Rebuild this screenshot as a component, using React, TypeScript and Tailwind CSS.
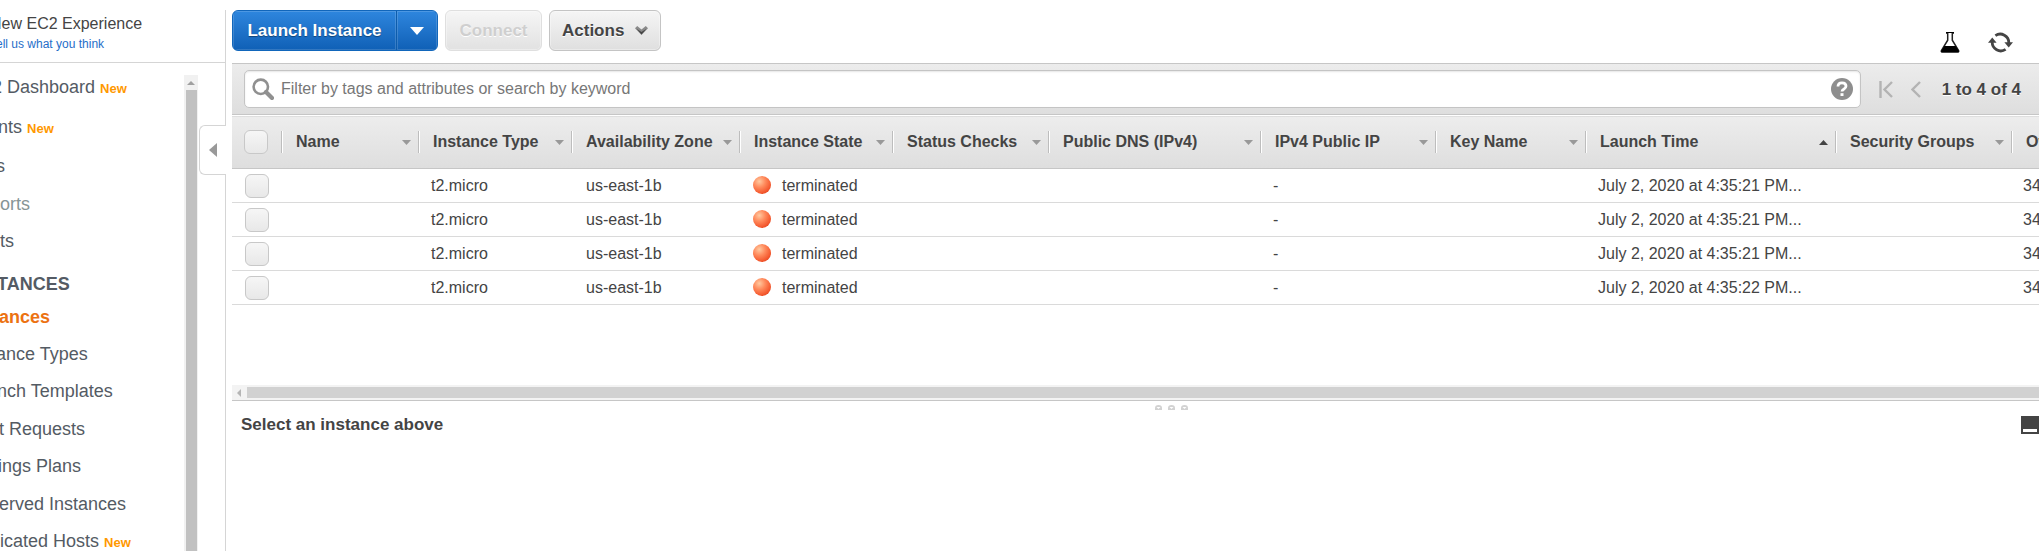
import React from 'react';

type NavItem = { label: string; isNew?: boolean; className: string };

const NAV: NavItem[] = [
  { label: 'EC2 Dashboard', isNew: true, className: 'h-10 text-[#545b64]' },
  { label: 'Events', isNew: true, className: 'h-10 text-[#545b64]' },
  { label: 'Tags', className: 'h-[38px] text-[#545b64]' },
  { label: 'Reports', className: 'h-[38px] text-[#879596]' },
  { label: 'Limits', className: 'h-9 text-[#545b64]' },
  { label: 'INSTANCES', className: 'h-[50px] font-bold text-[#545b64]' },
  { label: 'Instances', className: 'h-4 font-bold text-[#ec7211]' },
  { label: 'Instance Types', className: 'mt-[10px] h-[38px] text-[#545b64]' },
  { label: 'Launch Templates', className: 'h-[37px] text-[#545b64]' },
  { label: 'Spot Requests', className: 'h-[38px] text-[#545b64]' },
  { label: 'Savings Plans', className: 'h-[37px] text-[#545b64]' },
  { label: 'Reserved Instances', className: 'h-[38px] text-[#545b64]' },
  { label: 'Dedicated Hosts', isNew: true, className: 'h-[37px] text-[#545b64]' },
];

const COLUMNS = [
  { label: 'Name', width: 'w-[137px]' },
  { label: 'Instance Type', width: 'w-[153px]' },
  { label: 'Availability Zone', width: 'w-[168px]' },
  { label: 'Instance State', width: 'w-[153px]' },
  { label: 'Status Checks', width: 'w-[156px]' },
  { label: 'Public DNS (IPv4)', width: 'w-[212px]' },
  { label: 'IPv4 Public IP', width: 'w-[175px]' },
  { label: 'Key Name', width: 'w-[150px]' },
  { label: 'Launch Time', width: 'w-[250px]', sorted: true },
  { label: 'Security Groups', width: 'w-[176px]' },
  { label: 'Owner', width: 'w-[160px]' },
];

const ROWS = [
  { id: 1, launched: 'July 2, 2020 at 4:35:21 PM' },
  { id: 2, launched: 'July 2, 2020 at 4:35:21 PM' },
  { id: 3, launched: 'July 2, 2020 at 4:35:21 PM' },
  { id: 4, launched: 'July 2, 2020 at 4:35:22 PM' },
];

const GRAY_BUTTON =
  'flex h-[41px] items-center rounded-md border bg-linear-to-b from-[#f5f5f5] to-[#dfdfdf] px-3 text-[17px] font-bold shadow-[inset_0_0_0_1px_rgba(255,255,255,0.35)]';

function NewTag() {
  return <span className="ml-[5px] text-[13px] font-bold text-[#ff9900]">New</span>;
}

function Tick({ label }: { label: string }) {
  return (
    <input
      type="checkbox"
      aria-label={label}
      className="block size-6 appearance-none rounded-md border border-[#c8c8c8] bg-linear-to-b from-[#f6f6f6] to-[#e8e8e8]"
    />
  );
}

function Sidebar() {
  return (
    <aside className="relative mt-[10px] flex w-[226px] shrink-0 flex-col border-r border-[#d5d5d5]">
      <div className="h-[53px] overflow-hidden border-b border-[#d5d5d5] whitespace-nowrap">
        <div className="-ml-[10px]">
          <p className="pt-[3px] text-[16px] leading-[21px] text-[#444]">New EC2 Experience</p>
          <a href="#feedback" className="block text-[12px] leading-[20px] text-[#1f6ec9]">
            Tell us what you think
          </a>
        </div>
      </div>
      <div className="flex min-h-0 flex-1">
        <nav className="min-w-0 flex-1 overflow-hidden whitespace-nowrap">
          <ul className="-ml-[33px] pt-1 text-[18px]">
            {NAV.map((item) => (
              <li key={item.label} className={'flex items-center ' + item.className}>
                <a href="#nav" className="flex items-baseline">
                  {item.label}
                  {item.isNew && <NewTag />}
                </a>
              </li>
            ))}
          </ul>
        </nav>
        <div className="mt-3 mr-[27px] flex w-[14px] flex-col items-center bg-[#f1f1f1]">
          <svg className="h-[15px] w-2 shrink-0" viewBox="0 0 8 15" aria-hidden="true">
            <path d="M4 6l4 4H0z" fill="#a0a0a0" />
          </svg>
          <div className="w-[11px] flex-1 bg-[#c1c1c1]" />
        </div>
      </div>
      <button
        aria-label="Collapse sidebar"
        className="absolute top-[115px] -right-px flex h-[50px] w-[27px] items-center justify-center rounded-l-md border border-r-0 border-[#d5d5d5] bg-white"
      >
        <svg width="8" height="14" viewBox="0 0 8 14" aria-hidden="true">
          <path d="M8 0v14L0 7z" fill="#999" />
        </svg>
      </button>
    </aside>
  );
}

function Toolbar() {
  return (
    <div className="flex h-[63px] items-start pt-[10px]">
      <div className="flex h-[41px] overflow-hidden rounded-md border border-[#1166bb] bg-linear-to-b from-[#2e86de] to-[#0f60b6] text-white">
        <button className="w-[164px] border-r border-[#0d5cab] text-[17px] font-bold shadow-[inset_0_0_0_1px_rgba(255,255,255,0.15)] text-shadow-[0_1px_1px_rgba(0,0,0,0.4)]">
          Launch Instance
        </button>
        <button
          aria-label="Launch options"
          className="flex w-10 items-center justify-center shadow-[inset_0_0_0_1px_rgba(255,255,255,0.15)]"
        >
          <svg width="14" height="8" viewBox="0 0 14 8" aria-hidden="true">
            <path d="M0 0h14L7 8z" fill="#fff" />
          </svg>
        </button>
      </div>
      <button
        disabled
        className={GRAY_BUTTON + ' ml-[7px] w-[97px] justify-center border-[#dcdcdc] text-[#cacaca] opacity-90 text-shadow-[0_1px_0_#fff]'}
      >
        Connect
      </button>
      <button
        className={GRAY_BUTTON + ' ml-[7px] w-[112px] justify-between border-[#c4c4c4] text-[#444] text-shadow-[0_1px_0_#fff]'}
      >
        Actions
        <svg width="13" height="10" viewBox="0 0 13 10" aria-hidden="true">
          <path d="M0 2.2L2.2 0l4.300 3.600L10.800 0 13 2.200 6.500 9z" fill="#8a8a8a" />
          <path d="M1.600 2.800L6.500 6l4.900-3.200L6.500 8.400z" fill="#444" />
        </svg>
      </button>
      <div className="mt-[21px] mr-[26px] ml-auto flex gap-7">
        <button aria-label="Experiments">
          <svg width="20" height="21" viewBox="0 0 20 21" aria-hidden="true">
            <path d="M6 .8h8" stroke="#000" strokeWidth="1.8" />
            <path d="M7.700 1v7.200L1.400 18.600q-.5 1.200.8 1.200h15.600q1.300 0 .8-1.200L12.300 8.200V1" fill="#fff" stroke="#222" strokeWidth="1.500" />
            <path d="M4.300 14h11.400l3.200 5q.3 1.600-1.100 1.600H2.200Q.8 20.600 1.100 19z" fill="#000" />
          </svg>
        </button>
        <button aria-label="Refresh" className="mt-px">
          <svg width="25" height="21" viewBox="0 0 25 21" aria-hidden="true">
            <g fill="none" stroke="#444" strokeWidth="2.800">
              <path d="M7.400 3.600A8.600 8.600 0 0 1 20.800 11" />
              <path d="M17.600 17.400A8.600 8.600 0 0 1 4.200 10" />
            </g>
            <path d="M16.400 10.200H25L20.700 15.400z" fill="#444" />
            <path d="M0 10.800h8.600L4.300 5.600z" fill="#444" />
          </svg>
        </button>
      </div>
    </div>
  );
}

function FilterBar() {
  return (
    <div className="flex h-[52px] items-center border-y border-[#c6c6c6] bg-linear-to-b from-[#ececec] to-[#dedede] pr-[18px] pl-3">
      <label className="flex h-[38px] flex-1 items-center rounded-[5px] border border-[#c4c4c4] bg-white px-[7px] shadow-[inset_0_1px_2px_rgba(0,0,0,0.1)]">
        <svg width="22" height="22" viewBox="0 0 22 22" aria-hidden="true">
          <circle cx="8.800" cy="8.800" r="7.200" fill="none" stroke="#909090" strokeWidth="2.600" />
          <path d="M14 14l6 6" stroke="#909090" strokeWidth="4.200" strokeLinecap="round" />
        </svg>
        <input
          type="text"
          aria-label="Filter instances"
          placeholder="Filter by tags and attributes or search by keyword"
          className="min-w-0 flex-1 bg-transparent px-[7px] text-[16px] outline-none placeholder:text-[#777]"
        />
        <svg width="22" height="22" viewBox="0 0 22 22" aria-hidden="true">
          <circle cx="11" cy="11" r="11" fill="#8e8e8e" />
          <path d="M7 8.600Q7 4.800 11 4.800t4 3.300q0 1.700-2 2.900-2 1.100-2 2.600" fill="none" stroke="#fff" strokeWidth="2.800" />
          <path d="M9.500 15.200h3v2.800h-3z" fill="#fff" />
        </svg>
      </label>
      <button aria-label="First page" disabled className="ml-[18px]">
        <svg width="14" height="17" viewBox="0 0 14 17" aria-hidden="true">
          <path d="M1.500 0v17M13 1L5.500 8.500 13 16" fill="none" stroke="#b3b3b3" strokeWidth="2.400" />
        </svg>
      </button>
      <button aria-label="Previous page" disabled className="ml-[18px]">
        <svg width="10" height="17" viewBox="0 0 10 17" aria-hidden="true">
          <path d="M9 1L1.500 8.500 9 16" fill="none" stroke="#b3b3b3" strokeWidth="2.400" />
        </svg>
      </button>
      <span className="ml-[21px] pt-px text-[17px] font-bold text-[#444] text-shadow-[0_1px_0_#fff]">1 to 4 of 4</span>
    </div>
  );
}

function StateBall() {
  return (
    <span className="mb-[2px] size-[18px] shrink-0 rounded-full bg-[radial-gradient(circle_at_35%_30%,#ffc9a0_0%,#ff8a5c_35%,#f4592f_68%,#c9300f_100%)]" />
  );
}

function InstanceTable() {
  return (
    <div className="h-[270px] overflow-hidden">
      <table className="w-[1939px] min-w-full table-fixed border-collapse text-left text-[#444]">
        <thead>
          <tr className="h-[53px] border-t border-b border-t-white border-b-[#c6c6c6] bg-linear-to-b from-[#ededed] to-[#dedede]">
            <th className="w-[49px] p-0 pl-3">
              <Tick label="Select all instances" />
            </th>
            {COLUMNS.map((column) => (
              <th key={column.label} className={'p-0 ' + column.width}>
                <div className="flex h-[22px] items-center justify-between border-l border-[#bdbdbd] pr-[7px] shadow-[inset_1px_0_0_#fff]">
                  <span className="pl-[14px] text-[16px] font-bold whitespace-nowrap">{column.label}</span>
                  <svg width="9" height="5" viewBox="0 0 9 5" aria-hidden="true">
                    {column.sorted ? <path d="M0 5h9L4.500 0z" fill="#444" /> : <path d="M0 0h9L4.500 5z" fill="#999" />}
                  </svg>
                </div>
              </th>
            ))}
          </tr>
        </thead>
        <tbody className="text-[16px]">
          {ROWS.map((row) => (
            <tr key={row.id} className="h-[34px] border-b border-[#dadada]">
              <td className="p-0 pl-[13px]">
                <Tick label={'Select instance ' + row.id} />
              </td>
              <td />
              <td className="p-0 pl-[13px]">t2.micro</td>
              <td className="p-0 pl-[15px]">us-east-1b</td>
              <td className="p-0 pl-[14px]">
                <div className="flex items-center gap-[11px]">
                  <StateBall />
                  terminated
                </div>
              </td>
              <td />
              <td />
              <td className="p-0 pl-[13px]">-</td>
              <td />
              <td className="p-0 pl-[13px] whitespace-nowrap">{row.launched}...</td>
              <td />
              <td className="p-0 pl-3">34</td>
            </tr>
          ))}
        </tbody>
      </table>
    </div>
  );
}

function Grip() {
  return (
    <svg width="7" height="5" viewBox="0 0 7 5" aria-hidden="true">
      <path d="M0 5V3Q0 0 3.500 0T7 3v2z" fill="#d2d2d2" />
      <path d="M1.500 2h4l-2 2z" fill="#fff" />
    </svg>
  );
}

export default function App() {
  return (
    <div className="flex h-screen overflow-hidden bg-white font-['Liberation_Sans',Arial,sans-serif]">
      <Sidebar />
      <main className="ml-[6px] min-w-0 flex-1">
        <Toolbar />
        <FilterBar />
        <InstanceTable />
        <div className="flex h-4 items-center border-b border-[#c6c6c6] bg-[#f3f3f3]">
          <svg className="w-[15px] shrink-0" height="8" viewBox="0 0 15 8" aria-hidden="true">
            <path d="M9 0v8L5 4z" fill="#b5b5b5" />
          </svg>
          <div className="h-[11px] flex-1 bg-[#d1d1d1]" />
        </div>
        <div className="flex justify-center gap-[6px] pt-1 pl-[71px]">
          <Grip />
          <Grip />
          <Grip />
        </div>
        <div className="flex items-center justify-between pt-[5px] pl-[9px]">
          <h2 className="text-[17px] leading-5 font-bold text-[#444]">Select an instance above</h2>
          <button aria-label="Minimize panel" className="flex size-[18px] items-end justify-center bg-[#444] pb-[2px]">
            <span className="h-[3px] w-[14px] bg-white" />
          </button>
        </div>
      </main>
    </div>
  );
}
